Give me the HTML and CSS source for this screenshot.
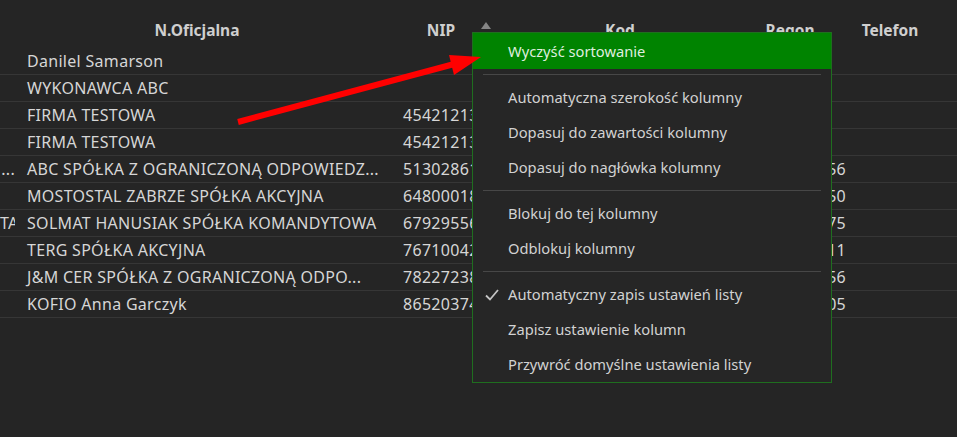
FILE: index.html
```html
<!DOCTYPE html>
<html lang="pl">
<head>
    <meta charset="UTF-8">
    <title>Lista kontrahentów</title>
    <link rel="stylesheet" href="styles.css">
</head>
<body>
    <div class="grid">
        <div class="row head">
            <div class="cell c0"></div>
            <div class="cell c1">N.Oficjalna</div>
            <div class="cell c2">NIP <span class="sort"></span></div>
            <div class="cell c3">Kod</div>
            <div class="cell c4">Regon</div>
            <div class="cell c5">Telefon</div>
        </div>
        <div class="row">
            <div class="cell c0"></div>
            <div class="cell c1">Danilel Samarson</div>
            <div class="cell c2"></div><div class="cell c3"></div><div class="cell c4"></div><div class="cell c5"></div>
        </div>
        <div class="row">
            <div class="cell c0"></div>
            <div class="cell c1">WYKONAWCA ABC</div>
            <div class="cell c2"></div><div class="cell c3"></div><div class="cell c4"></div><div class="cell c5"></div>
        </div>
        <div class="row">
            <div class="cell c0"></div>
            <div class="cell c1">FIRMA TESTOWA</div>
            <div class="cell c2">4542121321</div><div class="cell c3"></div><div class="cell c4"></div><div class="cell c5"></div>
        </div>
        <div class="row">
            <div class="cell c0"></div>
            <div class="cell c1">FIRMA TESTOWA</div>
            <div class="cell c2">4542121321</div><div class="cell c3"></div><div class="cell c4"></div><div class="cell c5"></div>
        </div>
        <div class="row">
            <div class="cell c0">...</div>
            <div class="cell c1">ABC SPÓŁKA Z OGRANICZONĄ ODPOWIEDZ...</div>
            <div class="cell c2">5130286151</div><div class="cell c3"></div><div class="cell c4">241535456</div><div class="cell c5"></div>
        </div>
        <div class="row">
            <div class="cell c0"></div>
            <div class="cell c1">MOSTOSTAL ZABRZE SPÓŁKA AKCYJNA</div>
            <div class="cell c2">6480001893</div><div class="cell c3"></div><div class="cell c4">270060150</div><div class="cell c5"></div>
        </div>
        <div class="row">
            <div class="cell c0">TA</div>
            <div class="cell c1">SOLMAT HANUSIAK SPÓŁKA KOMANDYTOWA</div>
            <div class="cell c2">6792955603</div><div class="cell c3"></div><div class="cell c4">122871475</div><div class="cell c5"></div>
        </div>
        <div class="row">
            <div class="cell c0"></div>
            <div class="cell c1">TERG SPÓŁKA AKCYJNA</div>
            <div class="cell c2">7671004219</div><div class="cell c3"></div><div class="cell c4">570192311</div><div class="cell c5"></div>
        </div>
        <div class="row">
            <div class="cell c0"></div>
            <div class="cell c1">J&amp;M CER SPÓŁKA Z OGRANICZONĄ ODPO...</div>
            <div class="cell c2">7822723839</div><div class="cell c3"></div><div class="cell c4">302553156</div><div class="cell c5"></div>
        </div>
        <div class="row">
            <div class="cell c0"></div>
            <div class="cell c1">KOFIO Anna Garczyk</div>
            <div class="cell c2">8652037456</div><div class="cell c3"></div><div class="cell c4">830447605</div><div class="cell c5"></div>
        </div>
    </div>

    <div class="menu">
        <div class="item active">Wyczyść sortowanie</div>
        <div class="sep"></div>
        <div class="item">Automatyczna szerokość kolumny</div>
        <div class="item">Dopasuj do zawartości kolumny</div>
        <div class="item">Dopasuj do nagłówka kolumny</div>
        <div class="sep"></div>
        <div class="item">Blokuj do tej kolumny</div>
        <div class="item">Odblokuj kolumny</div>
        <div class="sep"></div>
        <div class="item checked">
            <svg class="check" width="14" height="12" viewBox="0 0 14 12"><path d="M1 6.5 L5 10.5 L13 1" fill="none" stroke="#c4c4c4" stroke-width="1.8"/></svg>
            Automatyczny zapis ustawień listy
        </div>
        <div class="item">Zapisz ustawienie kolumn</div>
        <div class="item">Przywróć domyślne ustawienia listy</div>
    </div>

    <svg class="arrow" width="957" height="437" viewBox="0 0 957 437">
        <line x1="238" y1="122" x2="458" y2="63" stroke="#ff0000" stroke-width="6"/>
        <polygon points="481,57 454,75 449,55" fill="#ff0000"/>
    </svg>
</body>
</html>
```

FILE: styles.css
```css
html, body {
    margin: 0;
    padding: 0;
    height: 100%;
}
body {
    background-color: #252525;
    font-family: 'Noto Sans', 'Open Sans', sans-serif;
    font-size: 16px;
    letter-spacing: 0.3px;
    color: #d6d6d6;
    position: relative;
    overflow: hidden;
}
.grid {
    width: 100%;
}
.row {
    display: flex;
    height: 26px;
    align-items: center;
    border-bottom: 1px solid #363636;
}
.row.head {
    height: 48px;
    align-items: flex-start;
    border-bottom: none;
    font-weight: bold;
    font-size: 15.5px;
    letter-spacing: 0;
    color: #cfcfcf;
}
.row.head .cell {
    padding-top: 19px;
    padding-left: 0;
    text-align: center;
    position: relative;
}
.cell {
    white-space: nowrap;
    box-sizing: border-box;
    padding-left: 12px;
}
.c0 {
    width: 15px;
    padding-left: 0;
    text-align: right;
    overflow: hidden;
    flex-shrink: 0;
}
.c1 { width: 376px; flex-shrink: 0; overflow: hidden; }
.c2 { width: 100px; flex-shrink: 0; }
.c3 { width: 258px; flex-shrink: 0; }
.c4 { width: 82px; flex-shrink: 0; }
.c5 { width: 118px; flex-shrink: 0; }
.row.head .c1 { padding-right: 12px; }
.sort {
    position: absolute;
    right: 0;
    top: 22px;
    width: 0;
    height: 0;
    border-left: 5px solid transparent;
    border-right: 5px solid transparent;
    border-bottom: 7px solid #858585;
}
.menu {
    position: absolute;
    left: 472px;
    top: 32px;
    width: 358px;
    background-color: #262626;
    border: 1px solid #1f6e1f;
    font-size: 14.7px;
    letter-spacing: 0;
}
.item {
    height: 35px;
    line-height: 35px;
    padding-left: 35px;
    color: #d2d2d2;
    position: relative;
}
.item.active {
    height: 36px;
    line-height: 36px;
    background-color: #008300;
    color: #dfeedf;
}
.check {
    position: absolute;
    left: 12px;
    top: 12px;
}
.sep {
    height: 11px;
    position: relative;
}
.sep::after {
    content: '';
    position: absolute;
    left: 10px;
    right: 10px;
    top: 5px;
    border-top: 1px solid #474747;
}
.arrow {
    position: absolute;
    left: 0;
    top: 0;
}
```
